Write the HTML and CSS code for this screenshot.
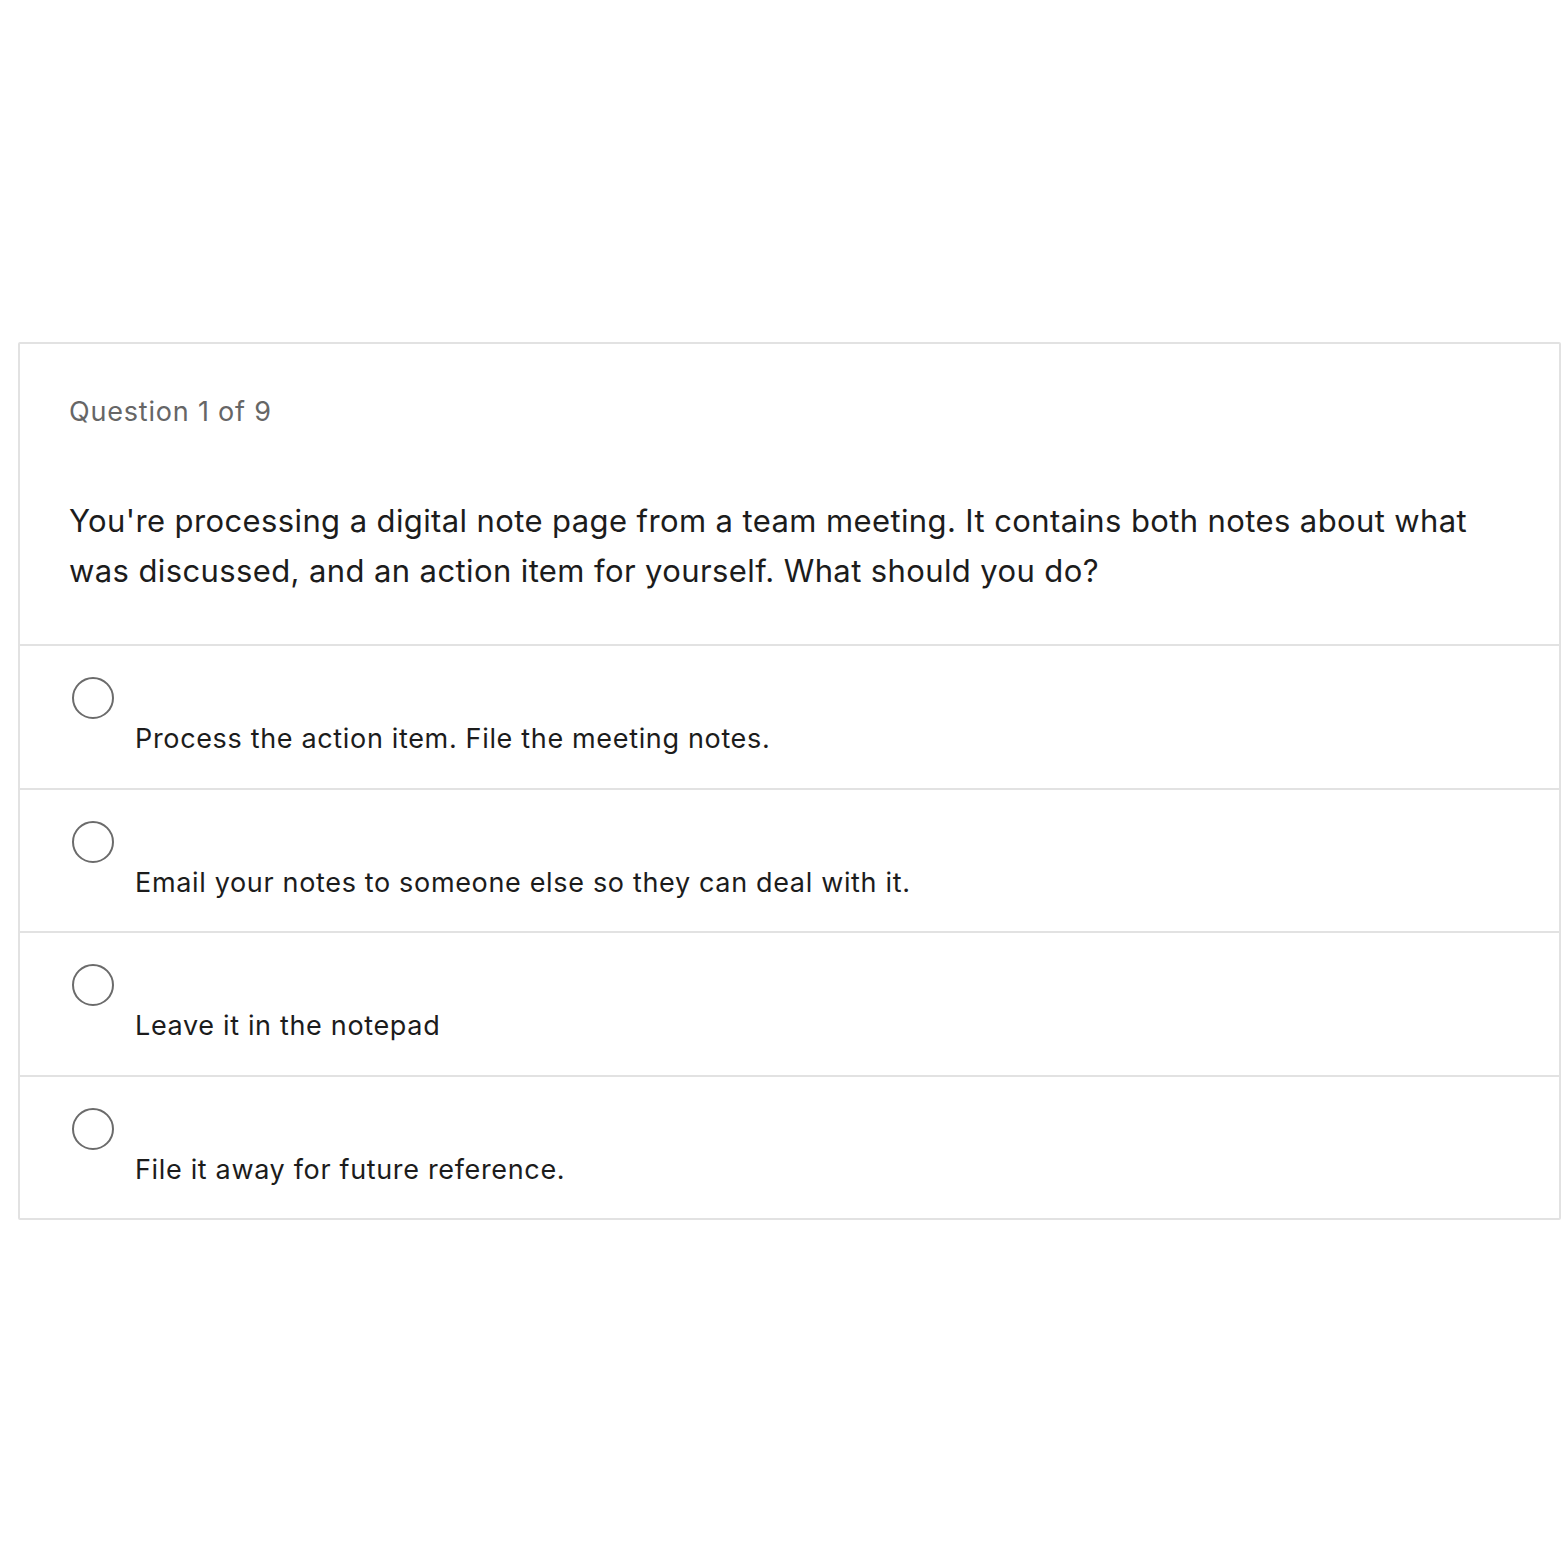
FILE: index.html
```html
<!DOCTYPE html>
<html>
<head>
<meta charset="utf-8">
<link rel="stylesheet" href="styles.css">
</head>
<body>
<div class="page">
  <div class="card">
    <div class="header">
      <div class="counter">Question 1 of 9</div>
      <div class="question">You're processing a digital note page from a team meeting. It contains both notes about what was discussed, and an action item for yourself. What should you do?</div>
    </div>
    <div class="option">
      <span class="radio"></span>
      <div class="label">Process the action item. File the meeting notes.</div>
    </div>
    <div class="option">
      <span class="radio"></span>
      <div class="label">Email your notes to someone else so they can deal with it.</div>
    </div>
    <div class="option">
      <span class="radio"></span>
      <div class="label">Leave it in the notepad</div>
    </div>
    <div class="option">
      <span class="radio"></span>
      <div class="label">File it away for future reference.</div>
    </div>
  </div>
</div>
</body>
</html>
```
FILE: styles.css
```css
html, body {
  margin: 0;
  padding: 0;
  background: #ffffff;
}
body {
  font-family: Inter, "Liberation Sans", Arial, sans-serif;
  color: #1a1a1a;
}
.page {
  padding: 342px 2px 0 18px;
}
.card {
  border: 2px solid #e2e2e2;
  border-radius: 2px;
  background: #fff;
}
.header {
  padding: 50px 49px 48px 49px;
}
.counter {
  font-size: 27px;
  line-height: 36px;
  color: #666666;
  letter-spacing: 0.8px;
}
.question {
  margin-top: 66px;
  font-size: 31px;
  line-height: 50px;
  color: #1c1c1c;
  letter-spacing: 0.39px;
}
.option {
  border-top: 2px solid #e2e2e2;
  padding: 31px 20px 30.5px 52px;
  display: grid;
  grid-template-columns: 42px 1fr;
  column-gap: 21px;
}
.radio {
  grid-column: 1;
  grid-row: 1;
  width: 38px;
  height: 38px;
  border: 2px solid #6b6b6b;
  border-radius: 50%;
}
.label {
  grid-column: 2;
  grid-row: 2;
  margin-top: 2px;
  font-size: 27px;
  line-height: 36px;
  color: #1c1c1c;
  letter-spacing: 0.66px;
}
```
